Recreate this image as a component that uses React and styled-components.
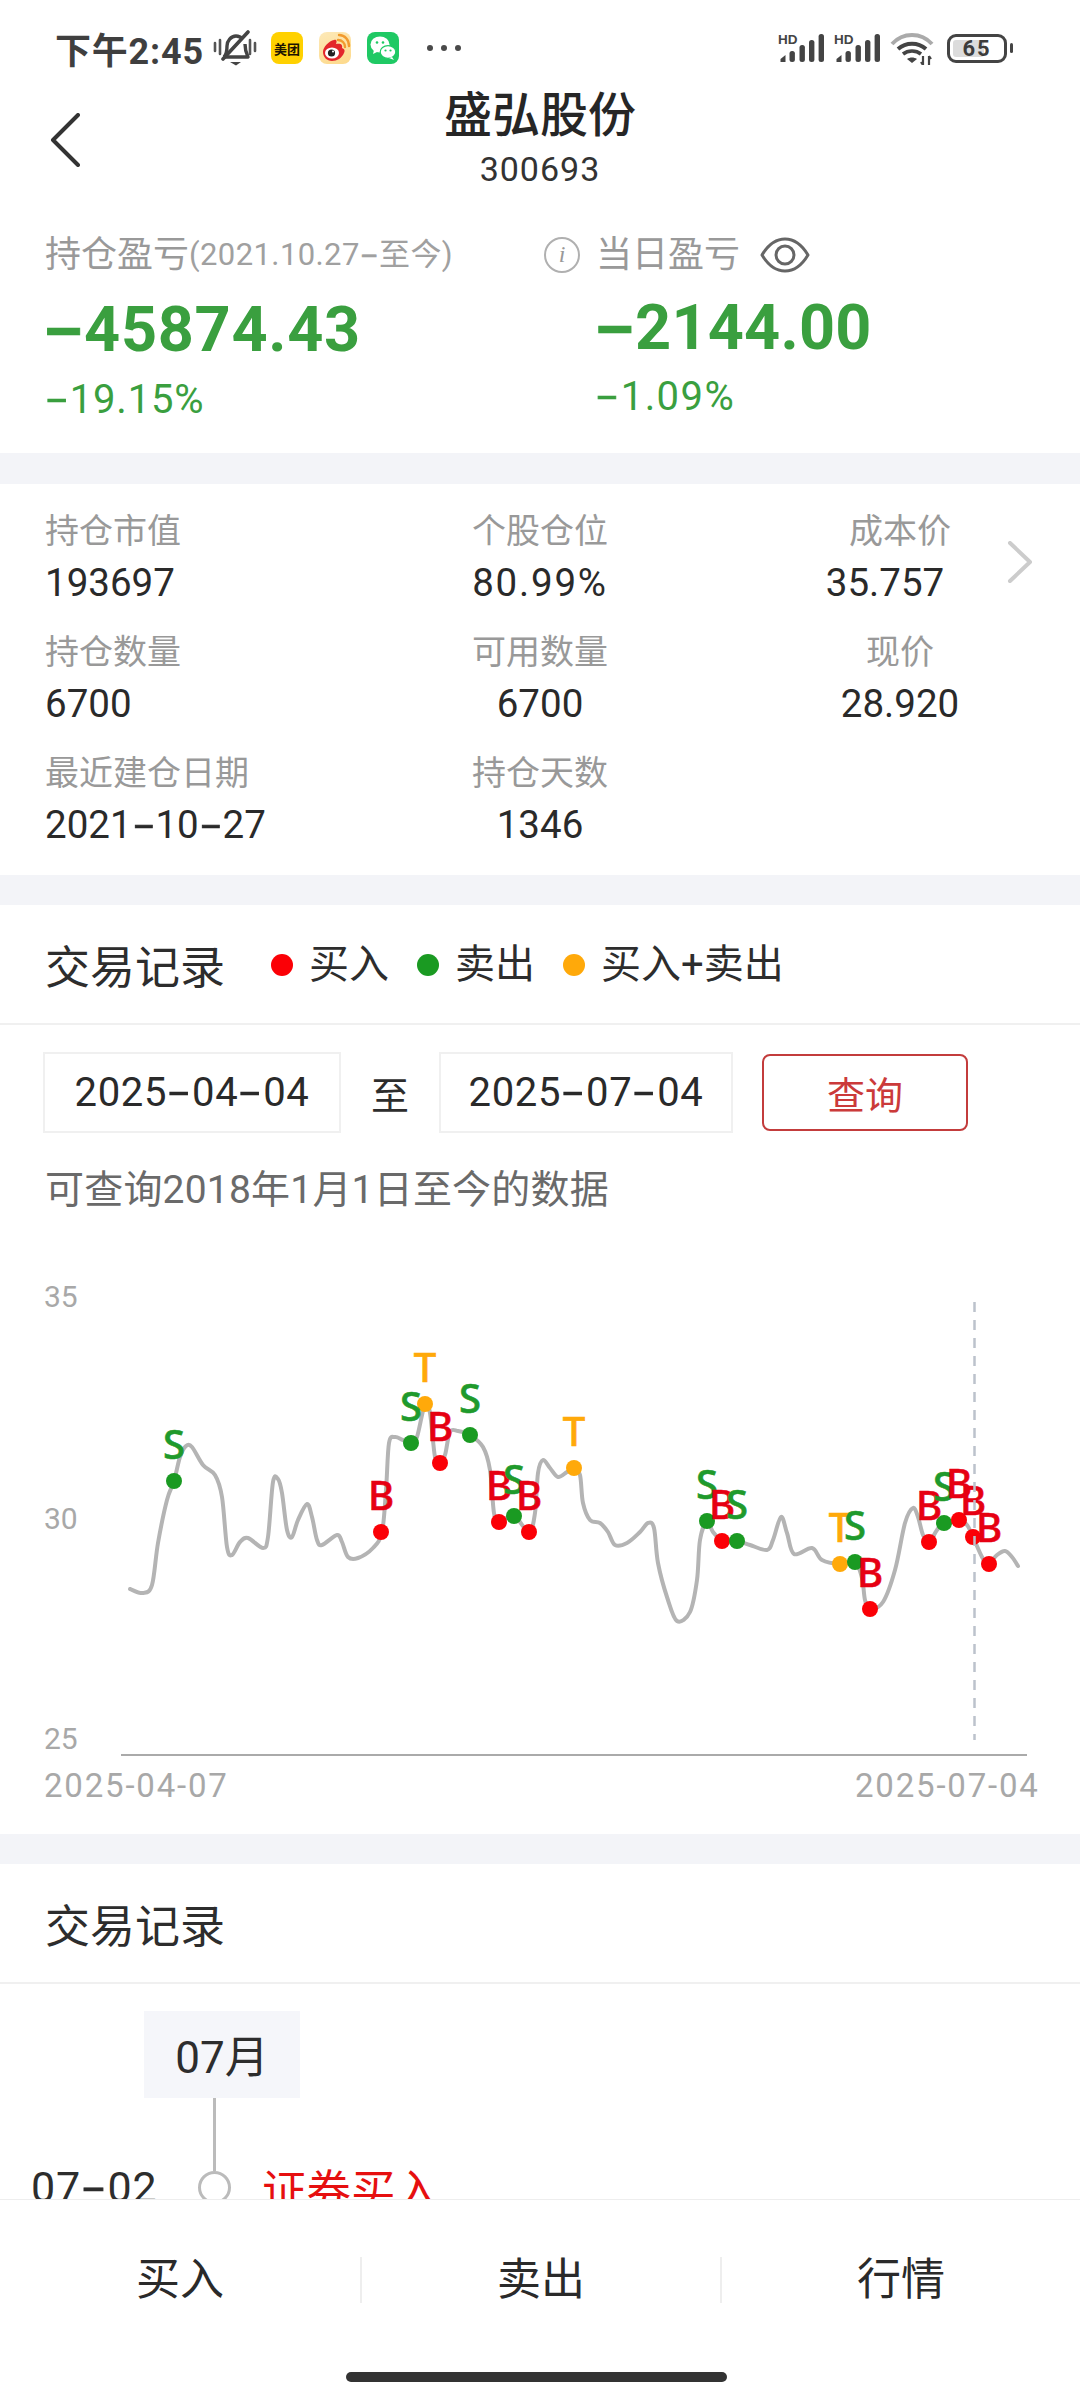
import React from 'react';
import styled, { createGlobalStyle } from 'styled-components';

const FONT = `Roboto, "Noto Sans CJK SC", sans-serif`;
const CJK = `"Noto Sans CJK SC", sans-serif`;

const GlobalStyle = createGlobalStyle`
  html, body {
    margin: 0;
    padding: 0;
    background: #fff;
    font-family: ${FONT};
    color: #2b2b2b;
  }
`;

const Page = styled.div`
  width: 1080px;
  height: 2400px;
  display: flex;
  flex-direction: column;
  overflow: hidden;
  background: #fff;
`;

const Scroller = styled.div`
  height: 2199px;
  flex: none;
  overflow: hidden;
`;

const Block = styled.section`
  background: #fff;
  border-bottom: ${(p) => (p.$line ? '2px solid #f0f0f0' : 'none')};
`;

const Gap = styled.div`
  height: ${(p) => p.$h}px;
  background: #f3f4f8;
`;

// the app draws its hyphens wider and heavier than Roboto does
const Dash = styled.span`
  display: inline-block;
  width: 0.62em;
  text-align: center;
  transform: scaleX(1.85);
  -webkit-text-stroke: 0.5px currentColor;
`;

const Dashed = ({ children }) =>
  children.split('-').flatMap((part, i) => (i ? [<Dash key={i}>-</Dash>, part] : [part]));

/* status bar */
const StatusBar = styled.div`
  height: 84px;
  padding: 6px 67px 0 55px;
  display: flex;
  align-items: center;
`;

const Clock = styled.span`
  font-size: 36px;
  font-weight: 700;
  color: #3f3f3f;
  letter-spacing: 0.8px;
  width: 158px;
  white-space: nowrap;
`;

const AppTile = styled.span`
  width: 32px;
  height: 32px;
  border-radius: 8px;
  margin-right: 16px;
  display: flex;
  align-items: center;
  justify-content: center;
  overflow: hidden;
  background: ${(p) => p.$bg};
`;

const TileText = styled.span`
  font-family: ${CJK};
  font-size: 13px;
  font-weight: 700;
  color: #1c1400;
  white-space: nowrap;
`;

const More = styled.div`
  display: flex;
  gap: 8px;
  margin-left: 12px;
`;

const MoreDot = styled.i`
  width: 6px;
  height: 6px;
  border-radius: 50%;
  background: #4a4a4a;
`;

const StatusRight = styled.div`
  margin-left: auto;
  display: flex;
  align-items: center;
  gap: 10px;
`;

const Battery = styled.div`
  width: 60px;
  height: 29px;
  box-sizing: border-box;
  border: 3px solid #444;
  border-radius: 9px;
  margin-left: 3px;
  padding: 3px;
  position: relative;
  display: flex;
`;

const BatteryFill = styled.div`
  width: 65%;
  background: #dcdcdc;
  border-radius: 3px;
`;

const BatteryText = styled.span`
  position: absolute;
  inset: 0;
  font-size: 22px;
  line-height: 23px;
  font-weight: 700;
  letter-spacing: 2px;
  text-align: center;
  color: #3c3c3c;
`;

const BatteryNub = styled.i`
  width: 3px;
  height: 10px;
  background: #444;
  border-radius: 2px;
  margin-left: -7px;
`;

/* nav */
const Nav = styled.header`
  height: 100px;
  display: grid;
  grid-template-columns: 1fr auto 1fr;
  align-items: center;
`;

const BackIcon = styled.svg`
  margin-left: 50px;
  display: block;
`;

const NavCenter = styled.div`
  margin-top: -5px;
  text-align: center;
`;

const NavTitle = styled.div`
  font-family: ${CJK};
  font-size: 48px;
  line-height: 48px;
  font-weight: 500;
  color: #262626;
`;

const NavCode = styled.div`
  margin-top: 14px;
  font-size: 34px;
  line-height: 40px;
  letter-spacing: 1px;
  color: #333;
`;

/* summary */
const Summary = styled.div`
  padding: 40px 0 28px 45px;
  display: grid;
  grid-template-columns: 499px 1fr;
`;

const SummaryHead = styled.div`
  height: 50px;
  display: flex;
  align-items: center;
  white-space: nowrap;
`;

const SummaryLabel = styled.span`
  font-size: 36px;
  line-height: 50px;
  color: #999;
`;

const SummaryNote = styled.span`
  font-size: 31px;
  line-height: 50px;
  letter-spacing: 0.4px;
  color: #a0a0a0;
`;

const InfoMark = styled.span`
  width: 36px;
  height: 36px;
  box-sizing: border-box;
  border: 2.5px solid #b0b0b0;
  border-radius: 50%;
  margin-right: 16px;
  font-family: "Liberation Serif", serif;
  font-style: italic;
  font-size: 24px;
  line-height: 30px;
  text-align: center;
  color: #999;
`;

const EyeIcon = styled.svg`
  margin-left: 20px;
  display: block;
`;

const Amount = styled.div`
  margin: ${(p) => (p.$right ? '12.5px 0 0 52px' : '14.5px 0 0')};
  font-size: 63px;
  line-height: 70px;
  font-weight: 700;
  letter-spacing: ${(p) => (p.$right ? '0.2px' : '0.7px')};
  color: #3a9f3f;
`;

const Percent = styled.div`
  margin: ${(p) => (p.$right ? '9px 0 0 52px' : '10px 0 0')};
  font-size: 40px;
  line-height: 50px;
  letter-spacing: ${(p) => (p.$right ? '1.4px' : '0.8px')};
  color: #3a9f3f;
`;

/* holding stats */
const Stats = styled.div`
  padding: 24px 0 27px 45px;
  display: grid;
  grid-template-columns: 315px 360px 285px 30px;
  row-gap: 23px;
  align-items: start;
`;

const Stat = styled.div`
  padding-left: ${(p) => (p.$third ? '75px' : '0')};
  text-align: ${(p) => (p.$center ? 'center' : 'left')};
`;

const StatLabel = styled.div`
  font-size: 34px;
  line-height: 46px;
  color: #999;
`;

const StatValue = styled.div`
  margin-top: 6px;
  margin-right: ${(p) => (p.$shift ? '30px' : '0')};
  font-size: 38.5px;
  line-height: 46px;
  letter-spacing: ${(p) => (p.$wide ? '1.8px' : '0')};
  color: #2a2a2a;
`;

const MoreIcon = styled.svg`
  display: block;
  align-self: center;
  margin: 10px 0 0 2px;
`;

/* trade record */
const TradeHead = styled.div`
  height: 118px;
  box-sizing: border-box;
  padding: 2px 0 0 45px;
  display: flex;
  align-items: center;
`;

const SectionTitle = styled.h2`
  margin: 0;
  font-size: 45px;
  font-weight: 400;
  color: #2d2d2d;
`;

const Legend = styled.div`
  display: flex;
  gap: 28px;
  margin-left: 46px;
`;

const LegendItem = styled.div`
  display: flex;
  align-items: center;
  gap: 16px;
  font-size: 40px;
  line-height: 50px;
  color: #2d2d2d;
`;

const LegendDot = styled.i`
  width: 22px;
  height: 22px;
  border-radius: 50%;
  background: ${(p) => p.$color};
`;

const QueryRow = styled.div`
  padding: 27px 0 0 43px;
  display: flex;
  align-items: center;
  gap: 29px;
`;

const DateBox = styled.div`
  width: ${(p) => p.$w}px;
  height: 81px;
  box-sizing: border-box;
  border: 2px solid #f0f0f0;
  display: flex;
  align-items: center;
  justify-content: center;
  font-size: 40px;
  letter-spacing: 0.7px;
  color: #2a2a2a;
`;

const To = styled.span`
  width: 40px;
  text-align: center;
  font-size: 38px;
  color: #2d2d2d;
`;

const QueryButton = styled.button`
  width: 206px;
  height: 77px;
  padding: 0;
  background: #fff;
  border: 2px solid #c33c3c;
  border-radius: 8px;
  font-family: ${CJK};
  font-size: 38px;
  color: #cb3a3a;
`;

const Hint = styled.p`
  margin: 32px 0 0 45px;
  font-size: 39px;
  line-height: 50px;
  letter-spacing: 0.2px;
  color: #6a6a6a;
`;

const Chart = styled.svg`
  display: block;
`;

const AxisText = styled.text`
  font-family: ${FONT};
  font-size: ${(p) => p.$size}px;
  letter-spacing: ${(p) => p.$space || 0}px;
  fill: #a8a8a8;
`;

const MarkerText = styled.text`
  font-family: "Noto Sans", sans-serif;
  font-size: 40px;
  font-weight: 500;
  fill: ${(p) => p.$color};
  stroke: ${(p) => p.$color};
  stroke-width: 0.6px;
`;

/* timeline */
const MonthBox = styled.div`
  width: 156px;
  height: 87px;
  margin: 27px 0 0 144px;
  background: #f5f6fa;
  display: flex;
  align-items: center;
  justify-content: center;
  font-size: 44px;
  color: #2d2d2d;
`;

const Connector = styled.div`
  width: 3px;
  height: 73px;
  margin-left: 213px;
  background: #bbb;
`;

const TimelineRow = styled.div`
  height: 33px;
  padding-left: 31px;
  display: flex;
  align-items: center;
`;

const RowDate = styled.span`
  width: 167px;
  font-size: 43px;
  letter-spacing: 0.8px;
  color: #2d2d2d;
  white-space: nowrap;
`;

const RowNode = styled.i`
  width: 33px;
  height: 33px;
  box-sizing: border-box;
  border: 3px solid #bbb;
  border-radius: 50%;
`;

const RowAction = styled.span`
  margin-left: 31px;
  font-family: ${CJK};
  font-size: 44.5px;
  color: #e60f0f;
`;

/* footer */
const Footer = styled.footer`
  flex: 1;
  border-top: 1px solid #eee;
`;

const Actions = styled.div`
  height: 160px;
  display: grid;
  grid-template-columns: repeat(3, 1fr);
  align-items: center;
`;

const Action = styled.div`
  height: 46px;
  line-height: 46px;
  text-align: center;
  font-size: 44px;
  color: #2a2a2a;
  border-left: ${(p) => (p.$first ? 'none' : '2px solid #eee')};
`;

const HomeBar = styled.div`
  width: 381px;
  height: 10px;
  margin: 12px 0 0 346px;
  border-radius: 5px;
  background: #333;
`;

/* drawings */
const MuteBell = () => (
  <svg width="44" height="36" viewBox="0 0 44 36" fill="none" style={{ marginRight: 14 }}>
    <path d="M11 27c3-3 3-7 3-11 0-5 4-10 9-10 3 0 5 1 7 3M32 14c0 5 1 9 3 13H11" stroke="#444" strokeWidth="3.4" strokeLinejoin="round" />
    <path d="M35 2 10 29" stroke="#444" strokeWidth="3.6" strokeLinecap="round" />
    <path d="M2 13v8M7 10v14M37 10v14M42 13v8" stroke="#555" strokeWidth="2.6" strokeLinecap="round" />
    <path d="M17 32h11l-5 3.5z" fill="#444" />
  </svg>
);

const WeiboGlyph = () => (
  <svg width="32" height="32" viewBox="0 0 32 32" fill="none">
    <path d="M19 8c4 0 7 3 7 7M20 3c6 0 10 5 10 11" stroke="#f29a2e" strokeWidth="2.4" strokeLinecap="round" />
    <path d="M4 20c0-5 6-11 11-12 3-1 3 2 2 4 4-1 7 0 6 4 3 1 3 3 2 5-2 5-7 8-12 8C8 29 4 25 4 20z" fill="#e3262b" />
    <ellipse cx="13" cy="21" rx="7" ry="5.6" fill="#fff" />
    <circle cx="12.5" cy="21" r="3.6" fill="#222" />
    <circle cx="14" cy="19.6" r="1" fill="#fff" />
  </svg>
);

const WechatGlyph = () => (
  <svg width="32" height="32" viewBox="0 0 32 32">
    <ellipse cx="13" cy="12.5" rx="9.5" ry="8" fill="#fff" />
    <path d="M7 18l-1 4 5-2.5z" fill="#fff" />
    <ellipse cx="21" cy="20" rx="7.8" ry="6.4" fill="#fff" stroke="#1fc964" strokeWidth="1.2" />
    <path d="M25 25l2 3-5-2z" fill="#fff" />
    <circle cx="10" cy="10.5" r="1.3" fill="#1fc964" />
    <circle cx="16" cy="10.5" r="1.3" fill="#1fc964" />
    <circle cx="18.5" cy="18.5" r="1.1" fill="#1fc964" />
    <circle cx="23.5" cy="18.5" r="1.1" fill="#1fc964" />
  </svg>
);

const Signal = () => (
  <svg width="46" height="30" viewBox="0 0 46 30" overflow="visible">
    <text x="0" y="11" fontFamily="Liberation Sans, sans-serif" fontSize="13.5" fontWeight="700" fill="#444">HD</text>
    <path d="M2.5 29v-3l5-4v7z" fill="#444" />
    <rect x="11.5" y="18" width="5.4" height="11" rx="2.5" fill="#444" />
    <rect x="21.5" y="12" width="5.4" height="17" rx="2.5" fill="#444" />
    <rect x="31" y="7" width="5.4" height="22" rx="2.5" fill="#444" />
    <rect x="40.6" y="1" width="5.4" height="28" rx="2.5" fill="#444" />
  </svg>
);

const Wifi = () => (
  <svg width="44" height="34" viewBox="0 0 44 34" fill="none">
    <path d="M2 13C13 1 31 1 42 13" stroke="#aaa" strokeWidth="4" />
    <path d="M8 18c8-7 20-7 28 0" stroke="#444" strokeWidth="4" />
    <path d="M13 23c5-4 13-4 18 0" stroke="#444" strokeWidth="3.6" />
    <path d="M17 28c3-2 7-2 10 0l-5 4z" fill="#444" />
    <path d="M33 25v9M31 31l2 3M39 34v-9M39 25l2 3" stroke="#444" strokeWidth="2.2" />
  </svg>
);

const RAW_LINE = [
  [130, 1589], [143, 1593], [152, 1585], [158, 1543], [167, 1500], [174, 1481], [180, 1457], [186, 1446],
  [192, 1447], [203, 1465], [215, 1475], [222, 1497], [227, 1547], [232, 1555], [240, 1542], [248, 1538],
  [263, 1548], [268, 1537], [273, 1482], [278, 1479], [282, 1493], [287, 1530], [292, 1537], [298, 1520],
  [307, 1504], [312, 1517], [317, 1540], [322, 1545], [337, 1535], [342, 1542], [348, 1557], [358, 1558],
  [373, 1548], [382, 1532], [386, 1490], [389, 1443], [395, 1437], [403, 1440], [411, 1443], [417, 1437],
  [425, 1404], [430, 1413], [435, 1457], [440, 1463], [445, 1455], [450, 1432], [458, 1431], [470, 1435],
  [483, 1447], [490, 1470], [494, 1513], [499, 1522], [514, 1516], [529, 1532], [535, 1513], [538, 1473],
  [543, 1460], [550, 1468], [558, 1477], [567, 1472], [574, 1468], [580, 1475], [583, 1503], [590, 1520],
  [600, 1523], [608, 1532], [615, 1545], [627, 1543], [640, 1532], [648, 1523], [654, 1528], [658, 1563],
  [667, 1597], [677, 1621], [690, 1612], [697, 1580], [700, 1540], [707, 1521], [713, 1532], [722, 1540],
  [737, 1541], [750, 1545], [767, 1550], [773, 1540], [781, 1517], [787, 1533], [794, 1554], [812, 1548],
  [822, 1560], [840, 1564], [855, 1562], [862, 1578], [865, 1600], [870, 1609], [883, 1602], [895, 1570],
  [905, 1523], [913, 1508], [918, 1517], [923, 1535], [929, 1542], [937, 1530], [944, 1523], [959, 1520],
  [967, 1525], [973, 1537], [982, 1557], [988, 1564], [997, 1555], [1005, 1551], [1012, 1557], [1018, 1566],
];

// catmull-rom through the sampled points
const smooth = (pts) => {
  let d = `M${pts[0][0]} ${pts[0][1]}`;
  for (let i = 0; i < pts.length - 1; i++) {
    const p0 = pts[i - 1] || pts[i];
    const p1 = pts[i];
    const p2 = pts[i + 1];
    const p3 = pts[i + 2] || p2;
    const c1x = p1[0] + (p2[0] - p0[0]) / 6;
    const c1y = p1[1] + (p2[1] - p0[1]) / 6;
    const c2x = p2[0] - (p3[0] - p1[0]) / 6;
    const c2y = p2[1] - (p3[1] - p1[1]) / 6;
    d += `C${c1x.toFixed(1)} ${c1y.toFixed(1)} ${c2x.toFixed(1)} ${c2y.toFixed(1)} ${p2[0]} ${p2[1]}`;
  }
  return d;
};

const KINDS = {
  B: { dot: '#fb0006', text: '#e60012' },
  S: { dot: '#1a9a22', text: '#1f9a2c' },
  T: { dot: '#ffa90a', text: '#ffa90a' },
};

const MARKERS = [
  ['S', 174, 1481], ['B', 381, 1532], ['S', 411, 1443], ['T', 425, 1404], ['B', 440, 1463], ['S', 470, 1435],
  ['B', 499, 1522], ['S', 514, 1516], ['B', 529, 1532], ['T', 574, 1468], ['S', 707, 1521], ['B', 722, 1541],
  ['S', 737, 1541], ['T', 840, 1564], ['S', 855, 1562], ['B', 870, 1609], ['B', 929, 1542], ['S', 944, 1523],
  ['B', 959, 1520], ['B', 973, 1537], ['B', 989, 1564],
];

const PriceChart = () => (
  <Chart width="1080" height="619" viewBox="0 1215 1080 619">
    <AxisText $size={30} x="44" y="1307">35</AxisText>
    <AxisText $size={30} x="44" y="1529">30</AxisText>
    <AxisText $size={30} x="44" y="1749">25</AxisText>
    <path d="M121 1755H1027" stroke="#aaa" strokeWidth="2" />
    <path d={smooth(RAW_LINE)} fill="none" stroke="#b4b4b4" strokeWidth="4" strokeLinecap="round" />
    {MARKERS.map(([k, x, y], i) => (
      <circle key={i} cx={x} cy={y} r="8" fill={KINDS[k].dot} />
    ))}
    {MARKERS.map(([k, x, y], i) => (
      <MarkerText key={i} x={x} y={y - 22} textAnchor="middle" $color={KINDS[k].text}>{k}</MarkerText>
    ))}
    <path d="M974.5 1302V1740" stroke="#bcc2cc" strokeWidth="2.5" strokeDasharray="10 8" />
    <AxisText $size={33} $space={1.8} x="44" y="1797">2025-04-07</AxisText>
    <AxisText $size={33} $space={1.8} x="855" y="1797">2025-07-04</AxisText>
  </Chart>
);

const STATS = [
  { label: '持仓市值', value: '193697' },
  { label: '个股仓位', value: '80.99%', center: true, wide: true },
  { label: '成本价', value: '35.757', center: true, third: true, shift: true },
  { label: '持仓数量', value: '6700' },
  { label: '可用数量', value: '6700', center: true },
  { label: '现价', value: '28.920', center: true, third: true },
  { label: '最近建仓日期', value: '2021-10-27' },
  { label: '持仓天数', value: '1346', center: true },
];

const StatCell = ({ s }) => (
  <Stat $center={s.center} $third={s.third}>
    <StatLabel>{s.label}</StatLabel>
    <StatValue $shift={s.shift} $wide={s.wide}><Dashed>{s.value}</Dashed></StatValue>
  </Stat>
);

export default function App() {
  return (
    <Page>
      <GlobalStyle />
      <Scroller>
        <Block>
          <StatusBar>
            <Clock>下午2:45</Clock>
            <MuteBell />
            <AppTile $bg="#ffd100"><TileText>美团</TileText></AppTile>
            <AppTile $bg="linear-gradient(160deg,#fde9b8,#fdd98a)"><WeiboGlyph /></AppTile>
            <AppTile $bg="#1fc964"><WechatGlyph /></AppTile>
            <More><MoreDot /><MoreDot /><MoreDot /></More>
            <StatusRight>
              <Signal />
              <Signal />
              <Wifi />
              <Battery>
                <BatteryFill />
                <BatteryText>65</BatteryText>
              </Battery>
              <BatteryNub />
            </StatusRight>
          </StatusBar>
          <Nav>
            <BackIcon width="30" height="54" viewBox="0 0 30 54" fill="none">
              <path d="M28 2 3 27l25 25" stroke="#333" strokeWidth="4" strokeLinecap="round" strokeLinejoin="round" />
            </BackIcon>
            <NavCenter>
              <NavTitle>盛弘股份</NavTitle>
              <NavCode>300693</NavCode>
            </NavCenter>
          </Nav>
          <Summary>
            <div>
              <SummaryHead>
                <SummaryLabel>持仓盈亏</SummaryLabel>
                <SummaryNote>(2021.10.27<Dash>-</Dash>至今)</SummaryNote>
              </SummaryHead>
              <Amount><Dashed>-45874.43</Dashed></Amount>
              <Percent><Dashed>-19.15%</Dashed></Percent>
            </div>
            <div>
              <SummaryHead>
                <InfoMark>i</InfoMark>
                <SummaryLabel>当日盈亏</SummaryLabel>
                <EyeIcon width="50" height="36" viewBox="0 0 50 36" fill="none">
                  <path d="M2 18C8 8 16 2 25 2s17 6 23 16c-6 10-14 16-23 16S8 28 2 18z" stroke="#666" strokeWidth="3" strokeLinejoin="round" />
                  <circle cx="25" cy="18" r="9" stroke="#666" strokeWidth="3" />
                </EyeIcon>
              </SummaryHead>
              <Amount $right><Dashed>-2144.00</Dashed></Amount>
              <Percent $right><Dashed>-1.09%</Dashed></Percent>
            </div>
          </Summary>
        </Block>
        <Gap $h={31} />
        <Block>
          <Stats>
            <StatCell s={STATS[0]} />
            <StatCell s={STATS[1]} />
            <StatCell s={STATS[2]} />
            <MoreIcon width="26" height="42" viewBox="0 0 26 42" fill="none">
              <path d="M3 2l20 19L3 40" stroke="#ccc" strokeWidth="4" strokeLinecap="round" strokeLinejoin="round" />
            </MoreIcon>
            <StatCell s={STATS[3]} />
            <StatCell s={STATS[4]} />
            <StatCell s={STATS[5]} />
            <span />
            <StatCell s={STATS[6]} />
            <StatCell s={STATS[7]} />
          </Stats>
        </Block>
        <Gap $h={30} />
        <Block $line>
          <TradeHead>
            <SectionTitle>交易记录</SectionTitle>
            <Legend>
              <LegendItem><LegendDot $color="#fb0006" />买入</LegendItem>
              <LegendItem><LegendDot $color="#1a9a22" />卖出</LegendItem>
              <LegendItem><LegendDot $color="#ffa90a" />买入+卖出</LegendItem>
            </Legend>
          </TradeHead>
        </Block>
        <Block>
          <QueryRow>
            <DateBox $w={298}><span><Dashed>2025-04-04</Dashed></span></DateBox>
            <To>至</To>
            <DateBox $w={294}><span><Dashed>2025-07-04</Dashed></span></DateBox>
            <QueryButton>查询</QueryButton>
          </QueryRow>
          <Hint>可查询2018年1月1日至今的数据</Hint>
          <PriceChart />
        </Block>
        <Gap $h={30} />
        <Block $line>
          <TradeHead>
            <SectionTitle>交易记录</SectionTitle>
          </TradeHead>
        </Block>
        <Block>
          <MonthBox>07月</MonthBox>
          <Connector />
          <TimelineRow>
            <RowDate><Dashed>07-02</Dashed></RowDate>
            <RowNode />
            <RowAction>证券买入</RowAction>
          </TimelineRow>
        </Block>
      </Scroller>
      <Footer>
        <Actions>
          <Action $first>买入</Action>
          <Action>卖出</Action>
          <Action>行情</Action>
        </Actions>
        <HomeBar />
      </Footer>
    </Page>
  );
}
